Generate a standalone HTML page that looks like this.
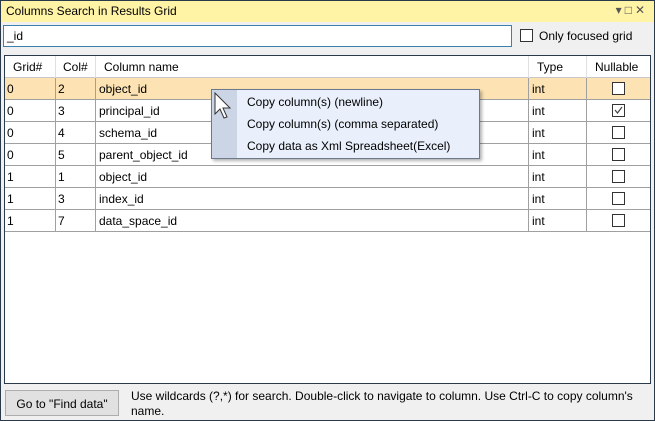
<!DOCTYPE html>
<html><head><style>
*{margin:0;padding:0;box-sizing:border-box}
body{width:655px;height:421px;overflow:hidden;background:#f0f0f0;font-family:"Liberation Sans",sans-serif;font-size:12px;color:#000;position:relative}
.a{position:absolute}
.frame{left:0;top:0;width:655px;height:421px;border:1px solid #2b3a4a}
.title{left:1px;top:1px;width:653px;height:21px;background:#fff3a6;padding:3px 0 0 5px;font-size:12px}
.inp{left:3px;top:25px;width:509px;height:22px;border:1px solid #3c7fb1;background:#fff;padding:3px 0 0 3px}
.cb{width:13px;height:13px;border:1px solid #333;background:#fff}
.grid{left:4px;top:55px;width:647px;height:329px;border:1px solid #2b3a4a;background:#fff}
.row{position:absolute;left:0;width:645px;height:22px;border-bottom:1px solid #a0a0a0}
.c{position:absolute;top:0;height:22px;padding:4px 0 0 2px;border-right:1px solid #a0a0a0}
.menu{left:211px;top:89px;width:269px;height:70px;border:1px solid #6a7a8c;background:#e9f0fb;box-shadow:2px 2px 3px rgba(0,0,0,.3)}
.menu .s{position:absolute;left:0;top:0;width:25px;height:68px;background:#ccd5e6}
.menu .i{position:absolute;left:35px}
.btn{left:5px;top:390px;width:114px;height:26px;border:1px solid #adadad;background:#e1e1e1;text-align:center;padding-top:6px}
</style></head><body>
<div class="a frame"></div>
<div class="a title">Columns Search in Results Grid<span style="position:absolute;right:6px;top:2px;color:#555;font-size:12px;letter-spacing:3px">▾□✕</span></div>
<div class="a inp">_id</div>
<div class="a cb" style="left:520px;top:29px"></div>
<div class="a" style="left:539px;top:29px">Only focused grid</div>
<div class="a grid">
 <div class="row" style="top:0;height:22px;border-bottom:1px solid #c8c8c8">
  <div class="c" style="left:0;width:51px;padding-left:8px;border-color:#e0e0e0">Grid#</div>
  <div class="c" style="left:51px;width:40px;padding-left:7px;border-color:#e0e0e0">Col#</div>
  <div class="c" style="left:91px;width:433px;padding-left:8px;border-color:#e0e0e0">Column name</div>
  <div class="c" style="left:524px;width:58px;padding-left:8px;border-color:#e0e0e0">Type</div>
  <div class="c" style="left:582px;width:63px;padding-left:8px;border:0">Nullable</div>
 </div>
</div>
<div id="rows"></div>
<div class="a menu"><div class="s"></div>
<svg class="a" style="left:2px;top:2px" width="22" height="30" viewBox="0 0 22 30"><path d="M1 1 L1 22 L6 17 L10 26 L13 25 L9 16 L16 16 Z" fill="#fff" stroke="#333" stroke-width="1"/></svg>
<div class="i" style="top:5px">Copy column(s) (newline)</div>
<div class="i" style="top:27px">Copy column(s) (comma separated)</div>
<div class="i" style="top:49px">Copy data as Xml Spreadsheet(Excel)</div>
</div>
<div class="a btn">Go to "Find data"</div>
<div class="a" style="left:131px;top:389px;width:515px;line-height:15px">Use wildcards (?,*) for search. Double-click to navigate to column. Use Ctrl-C to copy column's name.</div>
<script>
var d=[["0","2","object_id",0],["0","3","principal_id",1],["0","4","schema_id",0],["0","5","parent_object_id",0],["1","1","object_id",0],["1","3","index_id",0],["1","7","data_space_id",0]];
var h="";d.forEach(function(r,i){var t=78+i*22;var bg=i==0?"#fde3b3":"#fff";
h+='<div class="a" style="left:5px;top:'+t+'px;width:645px;height:22px;background:'+bg+';border-bottom:1px solid #a0a0a0">'+
'<div class="c" style="left:0;width:51px">'+r[0]+'</div><div class="c" style="left:51px;width:40px">'+r[1]+'</div>'+
'<div class="c" style="left:91px;width:433px;padding-left:3px">'+r[2]+'</div><div class="c" style="left:524px;width:58px;padding-left:3px">int</div>'+
'<div class="cb a" style="left:607px;top:4px">'+(r[3]?'<svg width="11" height="11" style="display:block"><path d="M2 5 L4.5 8 L9 2" fill="none" stroke="#444" stroke-width="1.2"/></svg>':'')+'</div></div>';});
document.getElementById("rows").innerHTML=h;
</script>
</body></html>
